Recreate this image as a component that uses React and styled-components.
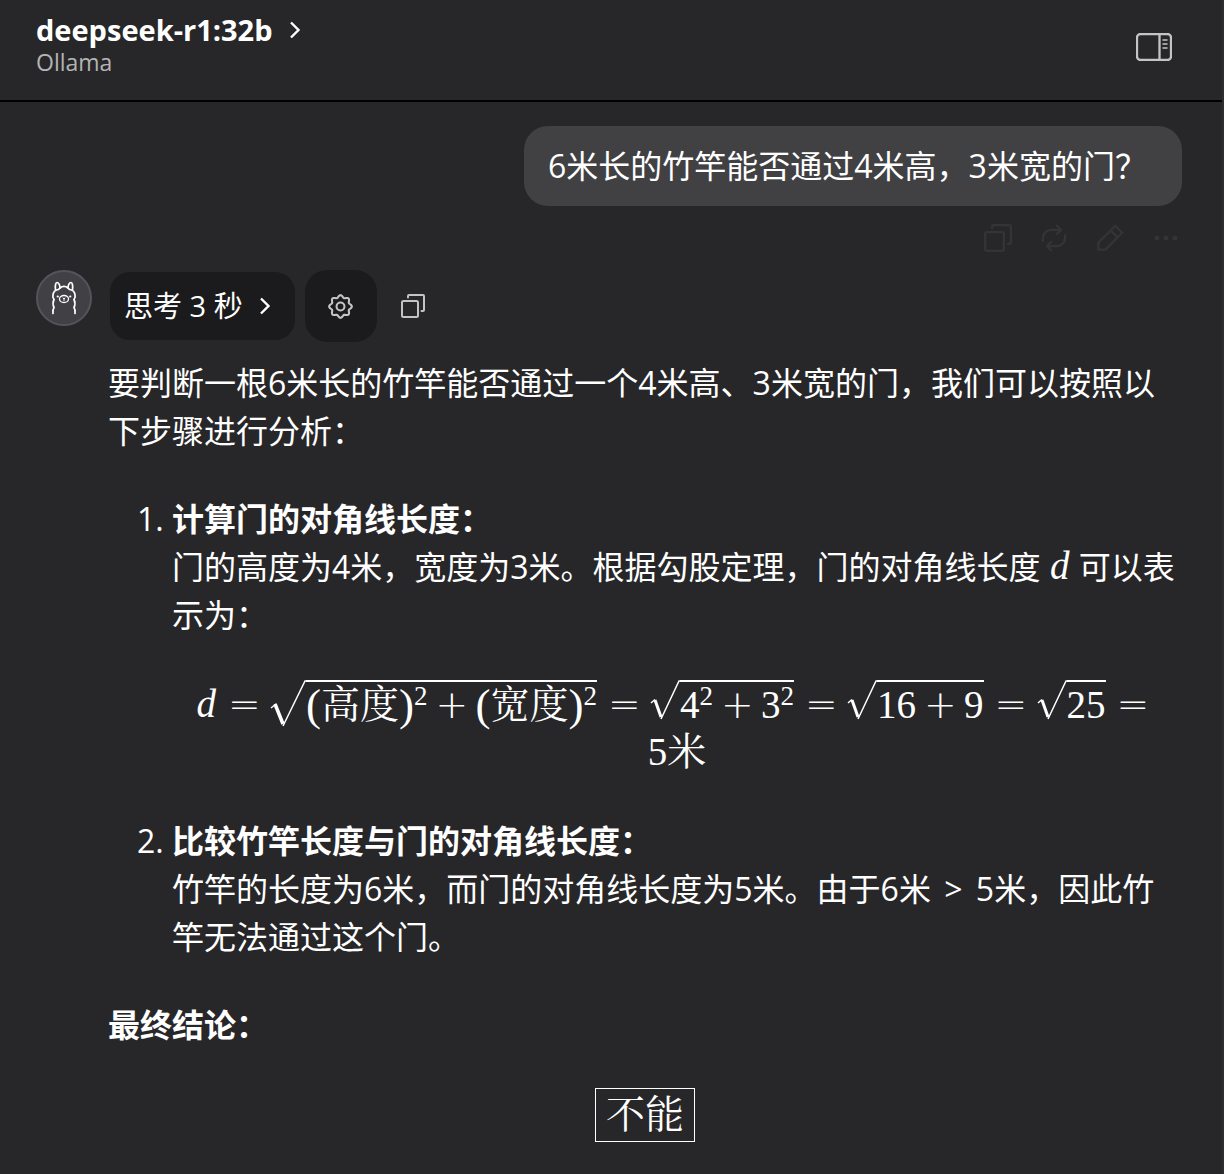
import React from "react";
import styled, { createGlobalStyle } from "styled-components";

const GlobalStyle = createGlobalStyle`
  * { box-sizing: border-box; }
  html { background: #272729; }
  body {
    margin: 0;
    background: #272729;
    color: #fff;
    font-family: "Open Sans", "Noto Sans CJK SC", sans-serif;
    font-size: 32px;
    line-height: 48px;
  }
  button { font: inherit; color: inherit; border: 0; background: none; padding: 0; cursor: pointer; }
  svg { display: block; flex: none; }
`;

const Page = styled.div`
  min-height: 100vh;
  border-right: 2px solid #2e2e30;
`;

const Header = styled.header`
  display: flex;
  align-items: center;
  justify-content: space-between;
  height: 102px;
  padding: 0 50px 6px 36px;
  border-bottom: 2px solid #000;
`;

const Model = styled.div`
  padding-bottom: 6px;
`;

const ModelButton = styled.button`
  display: flex;
  align-items: center;
  gap: 16px;
  font-size: 29px;
  line-height: 36px;
  font-weight: 700;
`;

const Provider = styled.div`
  font-size: 23px;
  line-height: 28px;
  color: #b4b4b4;
`;

const IconButton = styled.button`
  display: flex;
  align-items: center;
  justify-content: center;
  color: ${(p) => p.$color || "#c4c4c4"};
`;

const Chat = styled.main`
  display: flex;
  flex-direction: column;
  padding: 24px 40px 32px 36px;
`;

const Bubble = styled.div`
  align-self: flex-end;
  padding: 16px 24px;
  border-radius: 24px;
  background: #414144;
  width: 658px;
  max-width: 100%;
`;

const Actions = styled.div`
  display: flex;
  justify-content: flex-end;
  gap: 28px;
  padding: 18px 2px;
`;

const Reply = styled.article`
  display: grid;
  grid-template-columns: 56px minmax(0, 1fr);
  column-gap: 16px;
`;

const Avatar = styled.div`
  display: flex;
  align-items: center;
  justify-content: center;
  width: 56px;
  height: 56px;
  border: 2px solid #54545c;
  border-radius: 50%;
  background: #404045;
`;

const Tools = styled.div`
  display: flex;
  align-items: center;
  gap: 10px;
  height: 72px;
  padding-left: 2px;
`;

const ThinkButton = styled.button`
  display: flex;
  align-items: center;
  gap: 16px;
  height: 68px;
  padding: 0 24px 0 14px;
  border-radius: 20px;
  background: #1b1b1d;
  font-size: 29px;
`;

const GearButton = styled(IconButton)`
  width: 72px;
  height: 72px;
  margin-right: 14px;
  border-radius: 22px;
  background: #1b1b1d;
`;

const Body = styled.div`
  padding-top: 17px;
`;

const Paragraph = styled.p`
  margin: 0;
`;

const Steps = styled.ol`
  margin: 40px 0;
  padding-left: 64px;
  display: flex;
  flex-direction: column;
  gap: 41px;
`;

const Relation = styled.span`
  padding: 0 5px;
`;

const MathFont = styled.span`
  font-family: "Liberation Serif", "Noto Serif CJK SC", "Noto Sans CJK SC", serif;
  font-size: 39px;
`;

const Variable = styled(MathFont).attrs({ as: "var" })`
  padding: 0 1px;
  font-style: italic;
  line-height: 32px;
`;

const Equation = styled(MathFont).attrs({ as: "div" })`
  display: flex;
  flex-wrap: wrap;
  justify-content: center;
  margin-top: 41px;
  line-height: 48px;
`;

const Term = styled.span`
  display: inline-flex;
  align-items: center;
  height: 48px;
`;

const Operator = styled.span`
  width: ${(p) => (p.$wide ? 31 : 32)}px;
  margin: 0 ${(p) => (p.$wide ? 11 : 8)}px;
  text-align: center;
  font-family: "DejaVu Sans", sans-serif;
  font-weight: 200;
  font-size: 39px;
`;

const Root = styled.span`
  display: inline-flex;
  align-items: flex-start;
  height: 48px;
`;

const Radicand = styled.span`
  display: inline-flex;
  align-items: center;
  height: 48px;
  border-top: 2px solid #fff;
`;

const Paren = styled.span`
  font-size: 45px;
`;

const Power = styled.sup`
  align-self: flex-start;
  font-size: 27px;
  line-height: 28px;
`;

const Answer = styled.div`
  display: flex;
  justify-content: center;
  margin-top: 39px;
`;

const Boxed = styled(MathFont)`
  padding: 2px 10px;
  border: 1px solid #fff;
`;

const Stroke = ({ size, width = 2, children }) => (
  <svg width={size} height={size} viewBox="0 0 24 24" fill="none" stroke="currentColor" strokeWidth={width} strokeLinecap="round" strokeLinejoin="round" aria-hidden="true">
    {children}
  </svg>
);

const Chevron = () => (
  <svg width="12" height="18" viewBox="0 0 12 18" fill="none" stroke="currentColor" strokeWidth="2.4" aria-hidden="true">
    <path d="M2 1.5 9.5 9 2 16.5" />
  </svg>
);

const CopyIcon = ({ size }) => (
  <Stroke size={size}>
    <rect x="1" y="7" width="16" height="16" rx="1.5" />
    <path d="M7 3.500V2q0-1 1-1h14q1 0 1 1v14q0 1-1 1h-1.500" />
  </Stroke>
);

// Eight soft teeth: the radius swings round a circle as a cosine.
const gearOutline =
  "M" +
  Array.from({ length: 96 }, (_, i) => {
    const a = (i / 96) * Math.PI * 2;
    const r = 9.8 + 1.1 * Math.cos(8 * a);
    return `${(12 + r * Math.sin(a)).toFixed(2)} ${(12 - r * Math.cos(a)).toFixed(2)}`;
  }).join("L") +
  "Z";

const Surd = ({ tall }) => (
  <svg width={tall ? 36 : 30} height={tall ? 47 : 40} viewBox={tall ? "0 0 36 47" : "0 0 30 40"} fill="none" stroke="#fff" aria-hidden="true">
    {tall ? (
      <>
        <path d="M1 28 6 24" strokeWidth="1.500" />
        <path d="M5 24 13 44" strokeWidth="3.500" />
        <path d="M13 46 35 1h1" strokeWidth="1.500" />
      </>
    ) : (
      <>
        <path d="M1 23 5 19.500" strokeWidth="1.500" />
        <path d="M5 20 11 37" strokeWidth="3" />
        <path d="M11 39 29 1h1" strokeWidth="1.500" />
      </>
    )}
  </svg>
);

const Sqrt = ({ tall, children }) => (
  <Root>
    <Surd tall={tall} />
    <Radicand>{children}</Radicand>
  </Root>
);

const Eq = () => <Operator $wide>=</Operator>;
const Plus = () => <Operator>+</Operator>;

export default function App() {
  return (
    <Page>
      <GlobalStyle />
      <Header>
        <Model>
          <ModelButton>
            deepseek-r1:32b
            <Chevron />
          </ModelButton>
          <Provider>Ollama</Provider>
        </Model>
        <IconButton aria-label="Toggle side panel">
          <svg width="36" height="28" viewBox="0 0 36 28" fill="none" stroke="currentColor" strokeWidth="2" aria-hidden="true">
            <rect x="1" y="1" width="34" height="26" rx="3.500" strokeWidth="2.300" />
            <path d="M23.500 1v26" strokeWidth="2.300" />
            <path d="M26.500 7h5M26.500 11h5M26.500 15h5" strokeWidth="1.700" />
          </svg>
        </IconButton>
      </Header>
      <Chat>
        <Bubble>6米长的竹竿能否通过4米高，3米宽的门？</Bubble>
        <Actions>
          <IconButton $color="#343437" aria-label="Copy"><CopyIcon size={28} /></IconButton>
          <IconButton $color="#343437" aria-label="Regenerate">
            <Stroke size={28}>
              <path d="M2.500 14.500V12A7 7 0 0 1 9.500 5H18M14.500 1.500 18 5l-3.500 3.500M21.500 9.500V12a7 7 0 0 1-7 7H6M9.500 22.500 6 19l3.500-3.500" />
            </Stroke>
          </IconButton>
          <IconButton $color="#343437" aria-label="Edit">
            <Stroke size={28}>
              <path d="M2 22v-6L16.500 1.500l6 6L8 22zM12.500 5.500l6 6" />
            </Stroke>
          </IconButton>
          <IconButton $color="#343437" aria-label="More">
            <svg width="28" height="28" viewBox="0 0 28 28" fill="currentColor" aria-hidden="true">
              <circle cx="5" cy="14" r="2.500" /><circle cx="14" cy="14" r="2.500" /><circle cx="23" cy="14" r="2.500" />
            </svg>
          </IconButton>
        </Actions>
        <Reply>
          <Avatar>
            <svg width="26" height="34" viewBox="0 0 26 34" fill="none" stroke="#fff" strokeWidth="1.700" strokeLinecap="round" aria-hidden="true">
              <path d="M2 32.500c-.5-3 0-4.500 1-6-1.500-3-1.500-5 0-8-2.500-4-.5-8.500 2.500-9.500C7 9 8 8.500 9 7c2.500-2 5.500-2 8 0 1 1.500 2 2 3.500 2 3 1 5 5.500 2.500 9.500 1.500 3 1.500 5 0 8 1 1.500 1.500 3 1 6" />
              <path d="M4.500 9C4 5 4.500 1.500 6 1.500S9 4 9 7M21.500 9c.5-4 0-7.500-1.500-7.500S17 4 17 7" />
              <ellipse cx="13" cy="18" rx="4.500" ry="3.500" strokeWidth="1.300" />
              <path d="M12 17l1 .8 1-.8M13 18v1.500" strokeWidth="1" />
              <path d="M6.700 15.500h.1M19.200 15.500h.1" strokeWidth="2.200" />
            </svg>
          </Avatar>
          <div>
            <Tools>
              <ThinkButton>
                思考 3 秒
                <Chevron />
              </ThinkButton>
              <GearButton aria-label="Settings">
                <Stroke size={25}>
                  <circle cx="12" cy="12" r="3.800" />
                  <path d={gearOutline} />
                </Stroke>
              </GearButton>
              <IconButton aria-label="Copy reply"><CopyIcon size={24} /></IconButton>
            </Tools>
            <Body>
              <Paragraph>要判断一根6米长的竹竿能否通过一个4米高、3米宽的门，我们可以按照以下步骤进行分析：</Paragraph>
              <Steps>
                <li>
                  <strong>计算门的对角线长度：</strong>
                  <Paragraph>
                    门的高度为4米，宽度为3米。根据勾股定理，门的对角线长度 <Variable>d</Variable> 可以表示为：
                  </Paragraph>
                  <Equation>
                    <Term>
                      <Variable>d</Variable>
                      <Eq />
                    </Term>
                    <Term>
                      <Sqrt tall>
                        <Paren>(</Paren>高度<Paren>)</Paren><Power>2</Power>
                        <Plus />
                        <Paren>(</Paren>宽度<Paren>)</Paren><Power>2</Power>
                      </Sqrt>
                      <Eq />
                    </Term>
                    <Term>
                      <Sqrt>4<Power>2</Power><Plus />3<Power>2</Power></Sqrt>
                      <Eq />
                    </Term>
                    <Term>
                      <Sqrt>16<Plus />9</Sqrt>
                      <Eq />
                    </Term>
                    <Term>
                      <Sqrt>25</Sqrt>
                      <Eq />
                    </Term>
                    <Term>5米</Term>
                  </Equation>
                </li>
                <li>
                  <strong>比较竹竿长度与门的对角线长度：</strong>
                  <Paragraph>
                    竹竿的长度为6米，而门的对角线长度为5米。由于6米 <Relation>&gt;</Relation> 5米，因此竹竿无法通过这个门。
                  </Paragraph>
                </li>
              </Steps>
              <Paragraph><strong>最终结论：</strong></Paragraph>
              <Answer><Boxed>不能</Boxed></Answer>
            </Body>
          </div>
        </Reply>
      </Chat>
    </Page>
  );
}
